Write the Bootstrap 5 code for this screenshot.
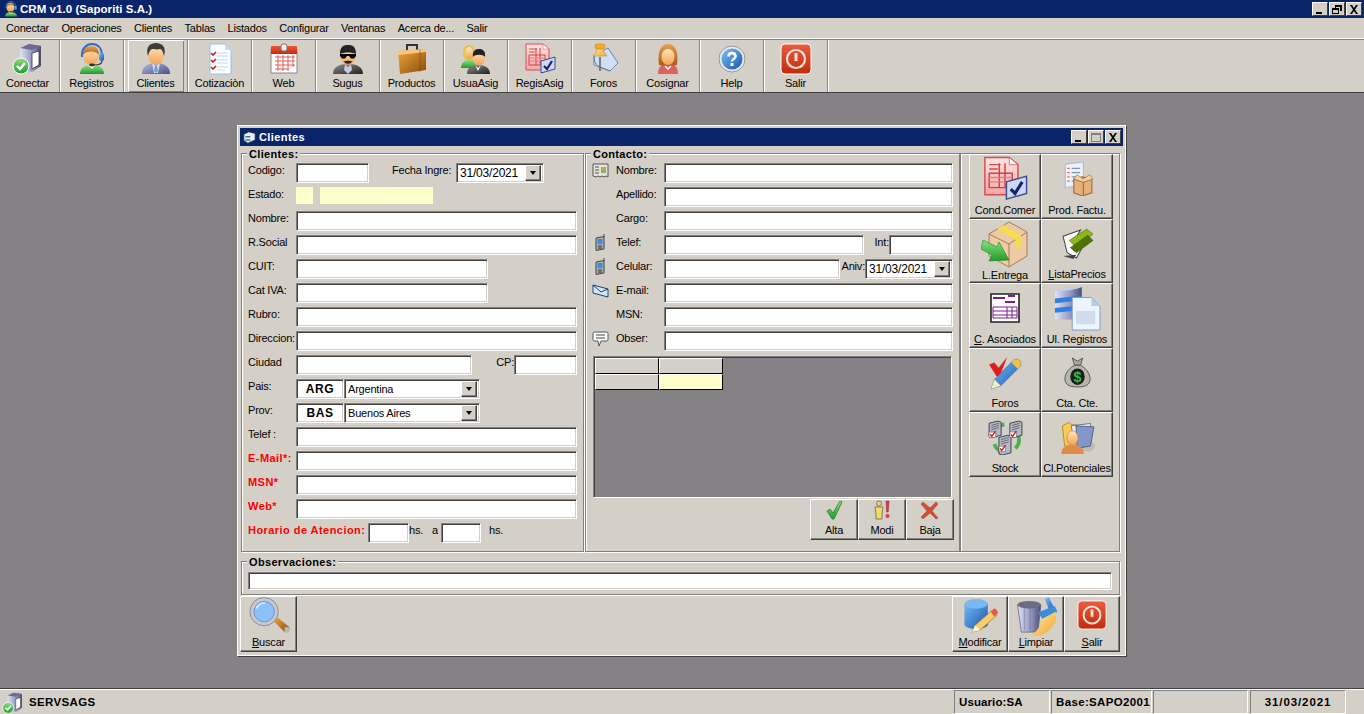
<!DOCTYPE html>
<html lang="es">
<head>
  <meta charset="UTF-8" />
  <title>CRM v1.0 (Saporiti S.A.)</title>
  <link href="https://cdn.jsdelivr.net/npm/bootstrap@5.3.3/dist/css/bootstrap.min.css" rel="stylesheet">
  <style>
    body { background: #d4d0c8; color: #000; font: 11px/14px "Liberation Sans", Arial, sans-serif; letter-spacing: -.2px; height: 714px; overflow: hidden; }
    button, input { letter-spacing: -.2px; }
    .defs { position: absolute; }
    .titlebar { height: 18px; background: #0a246a; color: #fff; padding-left: 3px; flex: none; }
    .titlebar b { font-size: 11.5px; margin-left: 1px; letter-spacing: .05px; }
    .titlebar svg { width: 16px; height: 16px; }
    .ctl { width: 16px; height: 14px; background: #d4d0c8; border: 1px solid; border-color: #fff #404040 #404040 #fff; padding: 0; display: flex; align-items: center; justify-content: center; }
    .ctl svg { width: 10px; height: 9px; }
    .ctls { gap: 1px; }
    .titlebar .ctls { margin-right: 2px; }
    .titlebar .ctls svg { width: 10px; height: 9px; }
    .menubar { height: 21px; flex: none; border-bottom: 1px solid #fff; padding-left: 6px; gap: 12.4px; line-height: 20px; }
    .toolbar { height: 54px; flex: none; border-top: 1px solid #808080; border-bottom: 1px solid #404040; margin-left: -4px; }
    .tool { width: 64px; height: 52px; padding: 3px 0 0; border: 0; border-radius: 0; border-right: 1px solid #8c8880; box-shadow: 1px 0 0 #fff; background: none; font: inherit; display: flex; flex-direction: column; align-items: center; position: relative; }
    .tool svg { width: 32px; height: 32px; margin-bottom: 1px; }
    .tool.on::before { content: ""; position: absolute; inset: 0 3px 0 4px; box-shadow: inset 1px 1px 0 #fff, inset -1px -1px 0 #808080; }
    .desk { flex: 1 1 auto; background: #848284; position: relative; border-bottom: 1px solid #404040; }
    .win { position: absolute; left: 237px; top: 32px; width: 889px; height: 531px; background: #d4d0c8; border: 3px solid #d4d0c8; outline: 1px solid #fff; outline-offset: -1px; box-shadow: 1px 1px 0 #404040; }
    .wintitle { height: 18px; background: #0a246a; color: #fff; padding: 0 2px 0 3px; }
    .wintitle svg.ic { width: 13px; height: 13px; }
    .wintitle b { margin-left: 3px; font-size: 11px; letter-spacing: .4px; }
    .winbody { padding: 7px 3px 0 1px; }
    .group { border: 1px solid #808080; box-shadow: inset 1px 1px 0 #fff, 1px 1px 0 #fff; position: relative; }
    .legend { position: absolute; top: -7px; left: 5px; background: #d4d0c8; padding: 0 2px; font-weight: 700; letter-spacing: .33px; }
    .g-cli { width: 343px; height: 399px; padding: 9px 6px 0 6px; }
    .g-con { width: 375px; height: 399px; padding: 9px 6px 0 6px; margin-left: 1px; }
    .g-side { width: 160px; height: 399px; padding: 0 0 0 8px; }
    .frow { height: 24px; display: flex; }
    .lbl { width: 48px; flex: none; white-space: nowrap; }
    .red { color: #f00; font-weight: 700; letter-spacing: .45px; }
    .l-fecha { margin-left: 23px; width: 64px; flex: none; }
    .l-hora { width: 120px; flex: none; white-space: nowrap; }
    .l-hs { width: 23px; flex: none; }
    .l-a { width: 9px; flex: none; }
    .ico { width: 24px; flex: none; }
    .ico svg { width: 17px; height: 17px; margin-top: -1px; display: block; }
    .field { height: 20px; border: 1px solid; border-color: #808080 #fff #fff #808080; box-shadow: inset 1px 1px 0 #404040, inset -1px -1px 0 #d4d0c8; background: #fff; padding: 0 3px; font: inherit; border-radius: 0; min-width: 0; flex: 1 1 auto; outline: 0; }
    .f-73 { flex: 0 0 73px; }
    .f-192 { flex: 0 0 192px; }
    .f-176 { flex: 0 0 176px; }
    .f-63 { flex: 0 0 63px; }
    .f-41 { flex: 0 0 41px; }
    .f-40 { flex: 0 0 40px; }
    .f-48 { flex: 0 0 48px; text-align: center; font-weight: 700; letter-spacing: .6px; font-size: 12px; }
    .f-200 { flex: 0 0 200px; }
    .f-64 { flex: 0 0 64px; }
    .yellow { background: #ffffcc; flex: none; height: 17px; }
    .y-17 { width: 17px; }
    .y-113 { width: 113px; margin-left: 7px; }
    .combo { height: 20px; display: flex; align-items: center; border: 1px solid; border-color: #808080 #fff #fff #808080; box-shadow: inset 1px 1px 0 #404040, inset -1px -1px 0 #d4d0c8; background: #fff; padding: 0 2px 0 3px; flex: none; white-space: nowrap; }
    .combo span { flex: 1 1 auto; }
    .combo span.date { font-size: 12px; }
    .combo i { width: 16px; height: 16px; background: #d4d0c8; border: 1px solid; border-color: #fff #404040 #404040 #fff; display: flex; align-items: center; justify-content: center; box-shadow: inset -1px -1px 0 #808080; }
    .combo i::after { content: ""; border: 3.5px solid transparent; border-top: 4px solid #000; border-bottom: 0; }
    .c-88 { width: 88px; }
    .c-136 { width: 136px; }
    .gridbox { margin: 1px 0 0 1px; height: 142px; width: 359px; background: #848284; border: 1px solid; border-color: #808080 #fff #fff #808080; box-shadow: inset 1px 1px 0 #404040; padding: 1px; }
    .gridbox table { border-collapse: separate; border-spacing: 0; }
    .gridbox td { width: 64px; height: 16px; background: #d4d0c8; border-top: 1px solid #fff; border-left: 1px solid #fff; border-right: 1px solid #000; border-bottom: 1px solid #000; padding: 0; }
    .gridbox td.yc { background: #ffffcc; }
    .cmd { border: 1px solid; border-color: #fff #404040 #404040 #fff; box-shadow: inset -1px -1px 0 #808080; background: #d4d0c8; border-radius: 0; padding: 0; font: inherit; display: flex; flex-direction: column; align-items: center; justify-content: flex-end; white-space: nowrap; overflow: hidden; }
    .cmd svg { display: block; }
    .cmd .cap { padding-bottom: 2px; }
    .cmds { justify-content: flex-end; margin: 1px -1px 0 0; }
    .cmds .cmd { width: 48px; height: 41px; }
    .cmds .cmd svg { width: 20px; height: 20px; margin-bottom: 3px; }
    .sidegrid { display: grid; grid-template-columns: 72px 72px; grid-auto-rows: 64.6px; }
    .sidegrid .cmd { justify-content: space-between; }
    .sidegrid .cmd .cap { padding-bottom: 1px; }
    .sidegrid .cmd .pic { flex: 1 1 auto; display: flex; align-items: center; justify-content: center; }
    .g-obs { height: 34px; margin-top: 9px; padding: 10px 7px 0 6px; }
    .g-obs .field { display: block; width: 100%; height: 18px; }
    .foot { height: 57px; justify-content: space-between; padding: 1px 0 0; margin-left: -1px; }
    .foot .cmd { width: 57px; height: 56px; }
    .foot .d-flex .cmd { width: 56px; }
    .foot .cmd svg { width: 44px; height: 40px; margin-bottom: -1px; }
    .foot .cmd svg.pw { width: 30px; height: 30px; margin-bottom: 5px; }
    .statusbar { height: 25px; flex: none; border-top: 1px solid #fff; }
    .statusbar b { font-size: 11.5px; letter-spacing: .35px; }
    .statusbar b.tight { letter-spacing: .1px; }
    .statusbar b.wide { letter-spacing: .9px; }
    .stmain { width: 954px; flex: none; }
    .stmain svg { width: 22px; height: 22px; margin: 1px 5px 0 2px; }
    .panel { border: 1px solid; border-color: #808080 #fff #fff #808080; height: 24px; line-height: 22px; margin-right: 1px; padding-left: 4px; white-space: nowrap; flex: none; }
    .p-96 { width: 96px; } .p-100 { width: 101px; } .p-94 { width: 95px; } .p-date { width: 96px; text-align: center; padding: 0; margin-left: 1px; }
  </style>
</head>
<body class="d-flex flex-column">

<svg class="defs" width="0" height="0">
  <defs>
    <linearGradient id="gSkin" x1="0" y1="0" x2="0" y2="1"><stop offset="0" stop-color="#ffe6bd"/><stop offset="1" stop-color="#f0a352"/></linearGradient>
    <linearGradient id="gSuit" x1="0" y1="0" x2="1" y2="1"><stop offset="0" stop-color="#b6bde2"/><stop offset="1" stop-color="#4a5088"/></linearGradient>
    <linearGradient id="gBlack" x1="0" y1="0" x2="1" y2="1"><stop offset="0" stop-color="#8c8c8c"/><stop offset="1" stop-color="#222"/></linearGradient>
    <linearGradient id="gGreen" x1="0" y1="0" x2="0" y2="1"><stop offset="0" stop-color="#8fe07c"/><stop offset="1" stop-color="#1f9a2c"/></linearGradient>
    <linearGradient id="gBlue" x1="0" y1="0" x2="1" y2="1"><stop offset="0" stop-color="#7fc0f5"/><stop offset="1" stop-color="#1456b0"/></linearGradient>
    <linearGradient id="gRed" x1="0" y1="0" x2="0" y2="1"><stop offset="0" stop-color="#ee5a3c"/><stop offset="1" stop-color="#c42a0c"/></linearGradient>
    <linearGradient id="gBrief" x1="0" y1="0" x2="1" y2="1"><stop offset="0" stop-color="#f0a83c"/><stop offset="1" stop-color="#8c4a0c"/></linearGradient>
    <linearGradient id="gGray" x1="0" y1="0" x2="1" y2="0"><stop offset="0" stop-color="#dfe3f2"/><stop offset=".6" stop-color="#8f93c0"/><stop offset="1" stop-color="#4a4c70"/></linearGradient>
    <linearGradient id="gHair" x1="0" y1="0" x2="0" y2="1"><stop offset="0" stop-color="#e8a050"/><stop offset="1" stop-color="#a85a1c"/></linearGradient>
    <linearGradient id="gYel" x1="0" y1="0" x2="1" y2="1"><stop offset="0" stop-color="#ffe79a"/><stop offset="1" stop-color="#f2a93c"/></linearGradient>
    <linearGradient id="gPink" x1="0" y1="0" x2="0" y2="1"><stop offset="0" stop-color="#fde4e4"/><stop offset="1" stop-color="#f5a8a8"/></linearGradient>

    <symbol id="i-conn" viewBox="0 0 32 32">
      <path d="M8 5l9-4 12 2v20l-9 6-12-4z" fill="url(#gGray)"/><path d="M8 5l9-4 12 2-9 4z" fill="#6a6c90"/>
      <path d="M20 10l7-2v14l-7 4z" fill="#fff" stroke="#333" stroke-width=".8"/>
      <circle cx="9" cy="23" r="8" fill="url(#gGreen)" stroke="#fff"/><path d="M5 23l3 3 5-6" fill="none" stroke="#fff" stroke-width="2.4"/>
    </symbol>
    <symbol id="i-head" viewBox="0 0 32 32">
      <path d="M4 31c0-6 5-9 12-9s12 3 12 9z" fill="url(#gGreen)"/><path d="M12 22l4 4 4-4z" fill="#fff"/>
      <ellipse cx="15" cy="13" rx="8" ry="9" fill="url(#gSkin)"/><path d="M7 12c0-6 3-9 8-9s8 3 8 9c-2-4-12-5-16 0z" fill="url(#gHair)"/>
      <path d="M6 14C5 5 11 1 16 1s10 3 10 12" fill="none" stroke="#2c6cc8" stroke-width="2"/><rect x="23" y="10" width="5" height="8" rx="2" fill="url(#gBlue)"/>
      <path d="M26 18c0 3-4 4-8 4" fill="none" stroke="#333" stroke-width="1.2"/><ellipse cx="16" cy="22" rx="3" ry="1.4" fill="#333"/>
    </symbol>
    <symbol id="i-man" viewBox="0 0 32 32">
      <path d="M2 31c0-7 5-11 14-11s14 4 14 11z" fill="url(#gSuit)"/><path d="M12 20l4 3 4-3-2 10h-4z" fill="#cfe0f4"/><path d="M15 23h2l1 5-2 2-2-2z" fill="#6f9ed0"/>
      <ellipse cx="16" cy="12" rx="8" ry="10" fill="url(#gSkin)"/><path d="M8 13C5 3 11 0 16 0s11 3 8 13c-1-4-2-7-4-7-3 1-7 0-8 0-2 1-3 3-4 7z" fill="#3c3c40"/>
    </symbol>
    <symbol id="i-cot" viewBox="0 0 32 32">
      <path d="M6 1h15l6 6v24H6z" fill="#fff" stroke="#8cc4f0"/><path d="M21 1v6h6z" fill="#bfe0f8"/>
      <path d="M13 10h11M13 13h11M13 17h11M13 20h11M13 24h11M13 27h8" stroke="#b8d8f0"/>
      <path d="M7 10l2 2 3-3M7 17l2 2 3-3M7 24l2 2 3-3" fill="none" stroke="#e01818" stroke-width="1.6"/>
    </symbol>
    <symbol id="i-cal" viewBox="0 0 32 32">
      <path d="M3 6h26v24H3z" fill="#fff" stroke="#888"/><path d="M3 3h26v8H3z" fill="url(#gRed)"/><rect x="13" y="1" width="6" height="7" rx="2" fill="#eee" stroke="#777"/>
      <path d="M7 14h20M7 18h20M7 22h20M7 26h14M10 12v16M15 12v16M20 12v16M25 12v12" stroke="#e25858" fill="none"/>
    </symbol>
    <symbol id="i-sugus" viewBox="0 0 32 32">
      <path d="M1 31c0-7 6-10 15-10s15 3 15 10z" fill="url(#gBlack)"/><path d="M13 21l3 3 3-3 1 6-4 4-4-4z" fill="#c4c8e0"/>
      <ellipse cx="16" cy="13" rx="7.5" ry="9" fill="url(#gSkin)"/><path d="M8 11C8 3 12 2 16 2s8 1 8 9c-4-2-12-2-16 0z" fill="#222"/>
      <path d="M8 11h16v2l-2 2.5h-3L17 13h-2l-2 2.5h-3L8 13z" fill="#000"/><path d="M12 18.500c2-1 6-1 8 0-1 3-7 3-8 0z" fill="#222"/>
    </symbol>
    <symbol id="i-brief" viewBox="0 0 32 32">
      <path d="M11 7V2h10v5" fill="none" stroke="#333" stroke-width="2"/><path d="M2 8l28-2v21L4 31z" fill="url(#gBrief)"/><path d="M2 8l28-2v3L2 12z" fill="#f8c878"/>
      <path d="M24 6.400v22.600" stroke="#7a3c08" stroke-opacity=".5"/>
    </symbol>
    <symbol id="i-users" viewBox="0 0 32 32">
      <ellipse cx="9" cy="10" rx="6" ry="8" fill="#e8c050"/><ellipse cx="9" cy="10" rx="4" ry="6" fill="url(#gSkin)"/><path d="M1 25c0-5 3-8 8-8s8 3 8 8z" fill="url(#gGreen)"/>
      <path d="M7 31c0-6 4-9 11-9s12 3 12 9z" fill="url(#gBlack)"/><path d="M15 22l3 3 3-3-3 6z" fill="#fff"/><ellipse cx="19" cy="15" rx="6" ry="7.500" fill="url(#gSkin)"/><path d="M13 14c-1-7 3-8 6-8s7 1 6 8c-2-3-10-3-12 0z" fill="#222"/>
    </symbol>
    <symbol id="i-form" viewBox="0 0 32 32">
      <path d="M2 1h17l6 5v21H2z" fill="url(#gPink)" stroke="#d84c4c"/><path d="M19 1v5h6z" fill="#fff" stroke="#d84c4c" stroke-width=".5"/>
      <path d="M5 6h8M5 9h6" stroke="#d84c4c"/><path d="M5 12h16v10H5zM12 5v17M16 5v17" fill="none" stroke="#d04040"/><path d="M5 15h16M5 18h16" stroke="#e87c7c"/>
      <path d="M17 18l14-4v12l-14 4z" fill="#cdd6f2" stroke="#3c4c90"/><path d="M20 23l3 3 5-8" fill="none" stroke="#14246c" stroke-width="2.200"/>
    </symbol>
    <symbol id="i-pin" viewBox="0 0 32 32">
      <path d="M6 13l14-8 10 15-8 8-16-6z" fill="#cfe0f4" stroke="#6c88b0"/><path d="M6 13c0 6 2 9 6 11l10 4" fill="none" stroke="#5f7ea6"/>
      <path d="M12 14v14" stroke="#666" stroke-width="1.600"/><rect x="7" y="1" width="10" height="5" rx="2" fill="#f5a92c" stroke="#c07c10" stroke-width=".5"/><path d="M9 6h6l1 3 3 4H5l3-4z" fill="url(#gYel)" stroke="#c98a1a" stroke-width=".6"/>
    </symbol>
    <symbol id="i-woman" viewBox="0 0 32 32">
      <path d="M6 31c0-7 3-10 10-10s10 3 10 10z" fill="#e06060"/><path d="M12 21l4 4 4-4-1 3-3 3-3-3z" fill="#fff"/>
      <path d="M7 22C5 8 9 1 16 1s11 7 9 21c-3 1-15 1-18 0z" fill="url(#gHair)"/><ellipse cx="16" cy="14" rx="6.500" ry="8" fill="url(#gSkin)"/>
    </symbol>
    <symbol id="i-help" viewBox="0 0 32 32">
      <circle cx="16" cy="16" r="13" fill="#e8e8ec" stroke="#999"/><circle cx="16" cy="16" r="10.500" fill="url(#gBlue)"/>
      <path d="M12.500 13.500c0-4.500 7-4.500 7 0 0 2.500-3.500 2.500-3.500 5" fill="none" stroke="#fff" stroke-width="2.600"/><rect x="14.500" y="20" width="3" height="3" fill="#fff"/>
    </symbol>
    <symbol id="i-power" viewBox="0 0 32 32">
      <rect x="1" y="1" width="30" height="30" rx="4" fill="url(#gRed)" stroke="#fff"/><circle cx="16" cy="16" r="9" fill="none" stroke="#fbe4dc" stroke-width="2.200"/><path d="M16 10v8" stroke="#fbe4dc" stroke-width="3"/>
    </symbol>
    <symbol id="i-prod" viewBox="0 0 32 32">
      <path d="M5 2l17-2v22l-17 2z" fill="#eef3fb" stroke="#a8bcd8"/><path d="M11 6h8M11 10h8M11 14h5M11 18h4" stroke="#7e94b8"/><path d="M7 6h2M7 10h2M7 14h2M7 18h2" stroke="#e06030" stroke-width="1.400"/>
      <path d="M13 16l8-2 9 2v13l-9 3-8-3z" fill="#e8b078" stroke="#9c6c3c"/><path d="M13 16l9 3 8-3M22 19v12" fill="none" stroke="#9c6c3c"/><path d="M16 12l6 4 6-4 3 4-9 3-9-3z" fill="#f2cfa4" stroke="#9c6c3c" stroke-width=".6"/>
    </symbol>
    <symbol id="i-box" viewBox="0 0 48 48">
      <path d="M8 14L28 2l18 10v24L28 47 8 36z" fill="#edc9a4" stroke="#a67c54"/><path d="M8 14l20 10 18-12M28 24v23" fill="none" stroke="#a67c54"/><path d="M16 9l19 11v9l5-3V15L22 5z" fill="#f5dc50"/>
      <path d="M2 20l14 7 2-5 10 18-20 1 3-6-11-6z" fill="url(#gGreen)" stroke="#158a20" stroke-width=".6"/>
    </symbol>
    <symbol id="i-tag" viewBox="0 0 32 32">
      <path d="M2 9l17-6-5 8 11 1-10 18-9-5z" fill="#fff" stroke="#444"/><path d="M2 28l10 3 3-4z" fill="#444"/><path d="M8 13L25 2l6 5-17 12z" fill="#8cb818" stroke="#4c6c08" stroke-width=".6"/><path d="M9 20L26 8l5 5-16 12z" fill="#4e7408" stroke="#405c08" stroke-width=".6"/>
    </symbol>
    <symbol id="i-inv" viewBox="0 0 32 32">
      <path d="M2 2h28v28H2z" fill="#fff" stroke="#222" stroke-width="1.600"/><path d="M4 6h12M19 4h7M16 10h10" stroke="#7c1c8c" stroke-width="2"/><path d="M4 15h24v11H4zM4 19h24M4 23h24M18 15v11M23 15v11" fill="none" stroke="#7c1c8c"/>
    </symbol>
    <symbol id="i-dbdoc" viewBox="0 0 48 48">
      <path d="M1 6l28-4v34L1 36z" fill="url(#gGray)"/><path d="M1 6c6-3 22-5 28-4-6 3-22 5-28 4z" fill="#c8cce4"/><path d="M1 14l28-3v5L1 19zM1 24l28-3v5L1 29z" fill="#2f7fe0"/>
      <path d="M19 13h20l9 9v25H19z" fill="#eef4fc" stroke="#7c9cc8"/><path d="M39 13v9h9z" fill="#b6cdea"/><rect x="23" y="27" width="20" height="14" fill="#cfdcec"/>
    </symbol>
    <symbol id="i-pencheck" viewBox="0 0 32 32">
      <path d="M1 8l5-2 4 5 8-10-7 18h-3z" fill="#e01c1c"/><path d="M3 31l3-9L24 4c4-3 9 1 6 6L12 28z" fill="url(#gBlue)" stroke="#1c5ab0" stroke-width=".5"/><path d="M24 4c4-3 9 1 6 6l-2 2-6-6z" fill="#f5c044"/><path d="M3 31l3-9 6 6z" fill="#fde8c4"/>
    </symbol>
    <symbol id="i-bag" viewBox="0 0 32 32">
      <path d="M11 2l5 3 5-3-2 7h-6z" fill="#a8a8a0" stroke="#444" stroke-width=".8"/><path d="M13 9h6c7 4 10 10 9 15-1 5-6 6-12 6s-11-1-12-6c-1-5 2-11 9-15z" fill="#b6b6ae" stroke="#444" stroke-width=".8"/>
      <ellipse cx="16" cy="20" rx="7" ry="8" fill="#1c1c1c"/><text x="16" y="25" text-anchor="middle" font-family="Liberation Sans" font-weight="700" font-size="14" fill="#22c43c">$</text>
    </symbol>
    <symbol id="i-stock" viewBox="0 0 32 32">
      <path d="M5 13C5 7 10 5 15 4M27 13c2 4 2 9-2 13M6 22c1 4 4 6 7 7" fill="none" stroke="#4cb050" stroke-width="3.400"/>
      <path d="M1 3l8-2 3 1v12l-8 2-3-1z" fill="#b4b8c8" stroke="#333" stroke-width=".8"/><path d="M20 3l8-2 3 1v12l-8 2-3-1z" fill="#b4b8c8" stroke="#333" stroke-width=".8"/><path d="M10 16l8-2 3 1v15l-8 2-3-1z" fill="#b4b8c8" stroke="#333" stroke-width=".8"/>
      <path d="M3 5l7-2M3 7l7-2M3 9l7-2M22 5l7-2M22 7l7-2M22 9l7-2M12 18l7-2M12 20l7-2M12 22l7-2" stroke="#444" stroke-width=".6"/>
      <path d="M1 11h6v5H1zM20 11h6v5h-6zM10 24h6v5h-6z" fill="#fff" stroke="#555" stroke-width=".5"/><path d="M2 13l1.500 2L7 10M21 13l1.500 2 3.500-5M11 26l1.500 2 3.500-5" fill="none" stroke="#d01c1c" stroke-width="1.300"/>
    </symbol>
    <symbol id="i-folder" viewBox="0 0 32 32">
      <ellipse cx="25" cy="24" rx="7" ry="5" fill="#c0bcb4"/><path d="M3 6l6-3 2 2 9 1v18L5 24z" fill="#f8cc50" stroke="#a87c18" stroke-width=".7"/><path d="M11 6l17-2-1 19-13 3z" fill="#eef1f8" stroke="#505870" stroke-width=".7"/><path d="M15 6l16 1-3 17-12 2z" fill="#8496c8" stroke="#404c70" stroke-width=".7"/>
      <ellipse cx="12" cy="17" rx="5" ry="6.500" fill="url(#gSkin)" stroke="#b06c28" stroke-width=".5"/><path d="M2 31c0-6 4-8 10-8s10 2 10 8z" fill="#e2894c"/>
    </symbol>
    <symbol id="i-ok" viewBox="0 0 20 20"><path d="M3 11l3-2 3 4 7-12 2 1-8 17H8z" fill="url(#gGreen)" stroke="#147a1e" stroke-width=".7"/></symbol>
    <symbol id="i-modi" viewBox="0 0 20 20">
      <circle cx="7" cy="3.500" r="2.500" fill="#e8d878" stroke="#555" stroke-width=".7"/><path d="M3 7h8l-1 7v5H4v-5z" fill="#f0dc60" stroke="#555" stroke-width=".7"/>
      <path d="M14 1h3l-.8 11h-1.500z" fill="#e03c50" stroke="#8c1c2c" stroke-width=".5"/><circle cx="15.500" cy="16" r="2" fill="#e03c50"/>
    </symbol>
    <symbol id="i-x" viewBox="0 0 20 20"><path d="M3 2l7 6 6-6 2 2-6 7 6 7-2 1-6-6-7 6-2-2 6-6-6-7z" fill="#d84c2c" stroke="#7c6c5c" stroke-width=".7"/></symbol>
    <symbol id="i-lens" viewBox="0 0 44 40">
      <path d="M27 25l4-4 12 10c1 3-2 6-5 5z" fill="url(#gBrief)"/><path d="M38 31l5 0c1 3-2 6-5 5z" fill="#bbb"/>
      <circle cx="17" cy="15" r="14.500" fill="#c8c8d0" stroke="#8a8a94"/><circle cx="17" cy="15" r="10.500" fill="#8cc0f8" stroke="#6c94cc"/><path d="M9 12c2-5 6-6 9-6" stroke="#d0e6fc" stroke-width="2" fill="none"/>
    </symbol>
    <symbol id="i-dbpen" viewBox="0 0 44 40">
      <path d="M6 7c3-6 21-6 24 0v22c-4 5-20 5-24 0z" fill="url(#gBlue)"/><ellipse cx="18" cy="7" rx="12" ry="5" fill="#7cb8f0"/>
      <path d="M14 36l3-7 17-15 5 5-17 15z" fill="#f7cd6c" stroke="#8c7444" stroke-width=".7"/><path d="M33 15l3-3c2-1 5 3 4 5l-3 3z" fill="#e05c40"/><path d="M14 36l3-7 5 5z" fill="#fdf0d8"/>
    </symbol>
    <symbol id="i-clean" viewBox="0 0 44 40">
      <path d="M3 8h24l-3 28H7z" fill="url(#gGray)" stroke="#55557a" stroke-width=".7"/><ellipse cx="15" cy="8" rx="12" ry="4" fill="#6c6c88"/><path d="M10 12v22M16 12v22M22 12l-1 22" stroke="#6c6c90" stroke-opacity=".6"/>
      <path d="M31 2l4-2 6 12-5 3z" fill="url(#gBlue)"/><path d="M24 16l17-7 3 6-15 8z" fill="#3c8cdc"/><path d="M27 23l15-8c3 10-4 21-17 25-4 0-9-1-9-1 7-3 11-9 11-16z" fill="url(#gYel)"/>
    </symbol>
    <symbol id="i-card" viewBox="0 0 17 17"><path d="M1 2h15v13l-2-1-2 1-2-1-2 1-2-1-2 1-3-1z" fill="#e4e4dc" stroke="#555"/><path d="M3 5h4M3 8h4M3 11h4" stroke="#555"/><rect x="9" y="5" width="5" height="6" fill="#7cb85c"/><circle cx="11.500" cy="6.500" r="1.500" fill="#e8a048"/></symbol>
    <symbol id="i-phone" viewBox="0 0 17 17"><path d="M12 0v3" stroke="#444"/><path d="M4 4l8-1.500V15l-8 1.500z" fill="#aab0b8" stroke="#444"/><rect x="5.500" y="5" width="5" height="5" fill="#3c8ce0"/><path d="M6 12h4M6 14h4" stroke="#333"/></symbol>
    <symbol id="i-env" viewBox="0 0 17 17"><path d="M1 3l15 4v8L1 11z" fill="#d4e6fa" stroke="#23406c"/><path d="M1 3l8 7 7-3" fill="none" stroke="#23406c"/></symbol>
    <symbol id="i-talk" viewBox="0 0 17 17"><path d="M3 2h11c2 0 2 1 2 2v5c0 2-1 2-2 2H9l-2 5-1-5H3c-2 0-2-1-2-2V4c0-1 0-2 2-2z" fill="#fff" stroke="#555"/><path d="M4 5h9M4 8h9" stroke="#444"/></symbol>
    <symbol id="i-win" viewBox="0 0 16 16"><path d="M1 4l6-3 8 2v8l-9 4-5-3z" fill="#e8eef8" stroke="#223"/><path d="M3 6h6v2H3zM3 10h6v2H3z" fill="#2a7a9c"/></symbol>
  </defs>
</svg>

<div class="titlebar d-flex align-items-center">
  <svg><use href="#i-head"/></svg>
  <b class="flex-grow-1">CRM v1.0 (Saporiti S.A.)</b>
  <div class="ctls d-flex">
    <button class="ctl"><svg viewBox="0 0 10 9"><path d="M1 7h6v2H1z"/></svg></button>
    <button class="ctl"><svg viewBox="0 0 10 9"><path d="M3 0h7v6H8V2H4v1H3zM0 3h7v6H0zM1 5v3h5V5z"/></svg></button>
    <button class="ctl"><svg viewBox="0 0 10 9"><path d="M1 0h2l2 3 2-3h2L6 4.500 9 9H7L5 6 3 9H1l3-4.500z"/></svg></button>
  </div>
</div>

<nav class="menubar d-flex">
  <span>Conectar</span><span>Operaciones</span><span>Clientes</span><span>Tablas</span><span>Listados</span><span>Configurar</span><span>Ventanas</span><span>Acerca de...</span><span>Salir</span>
</nav>

<div class="toolbar d-flex">
  <button class="tool"><svg><use href="#i-conn"/></svg>Conectar</button>
  <button class="tool"><svg><use href="#i-head"/></svg>Registros</button>
  <button class="tool on"><svg><use href="#i-man"/></svg>Clientes</button>
  <button class="tool"><svg><use href="#i-cot"/></svg>Cotizaciòn</button>
  <button class="tool"><svg><use href="#i-cal"/></svg>Web</button>
  <button class="tool"><svg><use href="#i-sugus"/></svg>Sugus</button>
  <button class="tool"><svg><use href="#i-brief"/></svg>Productos</button>
  <button class="tool"><svg><use href="#i-users"/></svg>UsuaAsig</button>
  <button class="tool"><svg><use href="#i-form"/></svg>RegisAsig</button>
  <button class="tool"><svg><use href="#i-pin"/></svg>Foros</button>
  <button class="tool"><svg><use href="#i-woman"/></svg>Cosignar</button>
  <button class="tool"><svg><use href="#i-help"/></svg>Help</button>
  <button class="tool"><svg><use href="#i-power"/></svg>Salir</button>
</div>

<main class="desk">
  <section class="win">
    <div class="wintitle d-flex align-items-center">
      <svg class="ic"><use href="#i-win"/></svg>
      <b class="flex-grow-1">Clientes</b>
      <div class="ctls d-flex">
        <button class="ctl"><svg viewBox="0 0 10 9"><path d="M1 7h6v2H1z"/></svg></button>
        <button class="ctl"><svg viewBox="0 0 10 9"><path d="M0 0h10v9H0zM1 2v6h8V2z" fill="#808080"/></svg></button>
        <button class="ctl"><svg viewBox="0 0 10 9"><path d="M1 0h2l2 3 2-3h2L6 4.500 9 9H7L5 6 3 9H1l3-4.500z"/></svg></button>
      </div>
    </div>
    <div class="winbody">
      <div class="d-flex">
        <div class="group g-cli">
          <span class="legend">Clientes:</span>
          <div class="frow"><span class="lbl">Codigo:</span><input class="field f-73"><span class="l-fecha">Fecha Ingre:</span><div class="combo c-88"><span class="date">31/03/2021</span><i></i></div></div>
          <div class="frow"><span class="lbl">Estado:</span><div class="yellow y-17"></div><div class="yellow y-113"></div></div>
          <div class="frow"><span class="lbl">Nombre:</span><input class="field"></div>
          <div class="frow"><span class="lbl">R.Social</span><input class="field"></div>
          <div class="frow"><span class="lbl">CUIT:</span><input class="field f-192"></div>
          <div class="frow"><span class="lbl">Cat IVA:</span><input class="field f-192"></div>
          <div class="frow"><span class="lbl">Rubro:</span><input class="field"></div>
          <div class="frow"><span class="lbl">Direccion:</span><input class="field"></div>
          <div class="frow"><span class="lbl">Ciudad</span><input class="field f-176"><span class="ms-auto">CP:</span><input class="field f-63"></div>
          <div class="frow"><span class="lbl">Pais:</span><input class="field f-48" value="ARG"><div class="combo c-136"><span>Argentina</span><i></i></div></div>
          <div class="frow"><span class="lbl">Prov:</span><input class="field f-48" value="BAS"><div class="combo c-136"><span>Buenos Aires</span><i></i></div></div>
          <div class="frow"><span class="lbl">Telef :</span><input class="field"></div>
          <div class="frow"><span class="lbl red">E-Mail*:</span><input class="field"></div>
          <div class="frow"><span class="lbl red">MSN*</span><input class="field"></div>
          <div class="frow"><span class="lbl red">Web*</span><input class="field"></div>
          <div class="frow"><span class="l-hora red">Horario de Atencion:</span><input class="field f-41"><span class="l-hs">hs.</span><span class="l-a">a</span><input class="field f-40"><span class="ms-2">hs.</span></div>
        </div>

        <div class="group g-con">
          <span class="legend">Contacto:</span>
          <div class="frow"><span class="ico"><svg><use href="#i-card"/></svg></span><span class="lbl">Nombre:</span><input class="field"></div>
          <div class="frow"><span class="ico"></span><span class="lbl">Apellido:</span><input class="field"></div>
          <div class="frow"><span class="ico"></span><span class="lbl">Cargo:</span><input class="field"></div>
          <div class="frow"><span class="ico"><svg><use href="#i-phone"/></svg></span><span class="lbl">Telef:</span><input class="field f-200"><span class="ms-auto">Int:</span><input class="field f-64"></div>
          <div class="frow"><span class="ico"><svg><use href="#i-phone"/></svg></span><span class="lbl">Celular:</span><input class="field f-176"><span class="ms-auto">Aniv:</span><div class="combo c-88"><span class="date">31/03/2021</span><i></i></div></div>
          <div class="frow"><span class="ico"><svg><use href="#i-env"/></svg></span><span class="lbl">E-mail:</span><input class="field"></div>
          <div class="frow"><span class="ico"></span><span class="lbl">MSN:</span><input class="field"></div>
          <div class="frow"><span class="ico"><svg><use href="#i-talk"/></svg></span><span class="lbl">Obser:</span><input class="field"></div>
          <div class="gridbox">
            <table><tr><td></td><td></td></tr><tr><td></td><td class="yc"></td></tr></table>
          </div>
          <div class="cmds d-flex">
            <button class="cmd"><svg><use href="#i-ok"/></svg><span class="cap">Alta</span></button>
            <button class="cmd"><svg><use href="#i-modi"/></svg><span class="cap">Modi</span></button>
            <button class="cmd"><svg><use href="#i-x"/></svg><span class="cap">Baja</span></button>
          </div>
        </div>

        <div class="group g-side">
          <div class="sidegrid">
            <button class="cmd"><span class="pic"><svg width="46" height="46"><use href="#i-form"/></svg></span><span class="cap">Cond.Comer</span></button>
            <button class="cmd"><span class="pic"><svg width="34" height="34"><use href="#i-prod"/></svg></span><span class="cap">Prod. Factu.</span></button>
            <button class="cmd"><span class="pic"><svg width="48" height="48"><use href="#i-box"/></svg></span><span class="cap">L.Entrega</span></button>
            <button class="cmd"><span class="pic"><svg width="33" height="33"><use href="#i-tag"/></svg></span><span class="cap"><u>L</u>istaPrecios</span></button>
            <button class="cmd"><span class="pic"><svg width="32" height="32"><use href="#i-inv"/></svg></span><span class="cap"><u>C</u>. Asociados</span></button>
            <button class="cmd"><span class="pic"><svg width="48" height="46"><use href="#i-dbdoc"/></svg></span><span class="cap">Ul. Registros</span></button>
            <button class="cmd"><span class="pic"><svg width="34" height="34"><use href="#i-pencheck"/></svg></span><span class="cap">Foros</span></button>
            <button class="cmd"><span class="pic"><svg width="33" height="33"><use href="#i-bag"/></svg></span><span class="cap">Cta. Cte.</span></button>
            <button class="cmd"><span class="pic"><svg width="35" height="35"><use href="#i-stock"/></svg></span><span class="cap">Stock</span></button>
            <button class="cmd"><span class="pic"><svg width="36" height="38"><use href="#i-folder"/></svg></span><span class="cap">Cl.Potenciales</span></button>
          </div>
        </div>
      </div>

      <div class="group g-obs">
        <span class="legend">Observaciones:</span>
        <input class="field">
      </div>

      <div class="foot d-flex">
        <button class="cmd"><svg><use href="#i-lens"/></svg><span class="cap"><u>B</u>uscar</span></button>
        <div class="d-flex">
          <button class="cmd"><svg><use href="#i-dbpen"/></svg><span class="cap"><u>M</u>odificar</span></button>
          <button class="cmd"><svg><use href="#i-clean"/></svg><span class="cap"><u>L</u>impiar</span></button>
          <button class="cmd"><svg class="pw"><use href="#i-power"/></svg><span class="cap"><u>S</u>alir</span></button>
        </div>
      </div>
    </div>
  </section>
</main>

<footer class="statusbar d-flex">
  <div class="stmain d-flex align-items-center"><svg><use href="#i-conn"/></svg><b>SERVSAGS</b></div>
  <div class="panel p-96"><b class="tight">Usuario:SA</b></div>
  <div class="panel p-100"><b>Base:SAPO2001</b></div>
  <div class="panel p-94"></div>
  <div class="panel p-date"><b class="wide">31/03/2021</b></div>
</footer>

</body>
</html>
